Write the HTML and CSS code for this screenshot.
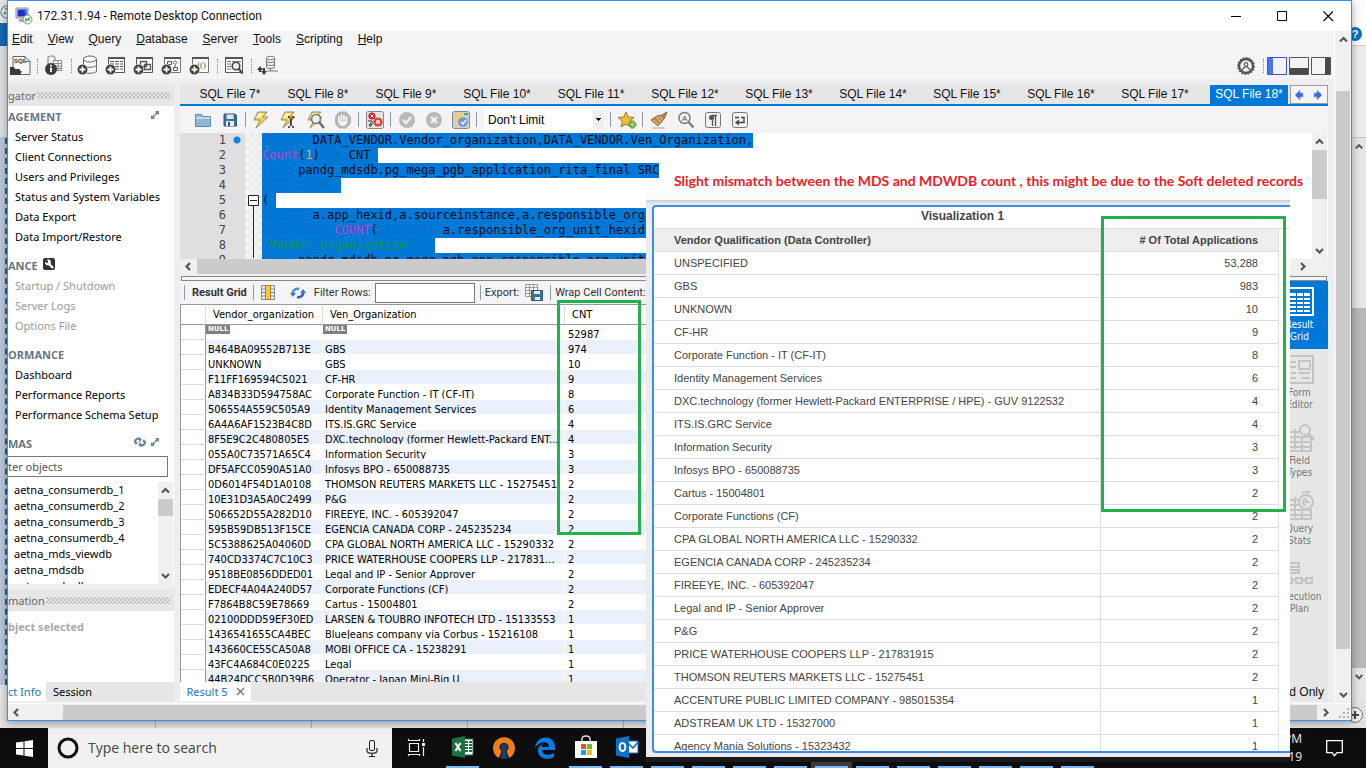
FILE: index.html
```html
<!DOCTYPE html>
<html lang="en">
<head>
<meta charset="utf-8">
<title>172.31.1.94 - Remote Desktop Connection</title>
<link rel="stylesheet" href="styles.css">
</head>
<body>
<svg class="defs" aria-hidden="true">
  <symbol id="up" viewBox="0 0 15 17"><path d="M4 10.500 7.500 7 11 10.500" fill="none" stroke="#555" stroke-width="2.200"/></symbol>
  <symbol id="down" viewBox="0 0 15 17"><path d="M4 7 7.500 10.500 11 7" fill="none" stroke="#555" stroke-width="2.200"/></symbol>
  <symbol id="left" viewBox="0 0 17 15"><path d="M10 4 6.500 7.500 10 11" fill="none" stroke="#555" stroke-width="2.200"/></symbol>
  <symbol id="right" viewBox="0 0 17 15"><path d="M7 4 10.500 7.500 7 11" fill="none" stroke="#555" stroke-width="2.200"/></symbol>
  <symbol id="plus" viewBox="0 0 11 11"><circle cx="5.500" cy="5.500" r="5.200" fill="#3b3b3b" stroke="#f4f4f7" stroke-width=".6"/><path d="M5.500 2.500v6M2.500 5.500h6" stroke="#fff" stroke-width="1.800"/></symbol>
  <symbol id="bolt" viewBox="0 0 20 20"><path d="M6 2h9l-4 5h5L4 18l4-8H2z" fill="#f5cf5a" stroke="#9c8a52" stroke-width="1"/><path d="M7 3h5L8 8H4z" fill="#fff2b8"/></symbol>
  <symbol id="expand" viewBox="0 0 8 8"><path d="M4 0h4v4L6.700 2.700 5 4.400 3.600 3 5.300 1.300zM4 8H0V4l1.300 1.300L3 3.600 4.400 5 2.700 6.700z" fill="#758699"/></symbol>
  <symbol id="grid" viewBox="0 0 30 30"><path d="M1 1h27v27H1z" fill="none" stroke="currentColor" stroke-width="2"/><path d="M4 6h7v3H4zm8 0h6v3h-6zm7 0h6v3h-6zM4 11h7v2H4zm8 0h6v2h-6zm7 0h6v2h-6zM4 15h7v2H4zm8 0h6v2h-6zm7 0h6v2h-6zM4 19h7v2H4zm8 0h6v2h-6zm7 0h6v2h-6zM4 23h7v2H4zm8 0h6v2h-6zm7 0h6v2h-6z" fill="currentColor"/></symbol>
</svg>

<div class="desktop">
  <div class="backdrop backdrop-left">
    <svg class="app-mark" width="7" height="16" viewBox="0 0 7 16"><circle cx="7" cy="8" r="6" fill="#e6eef5" stroke="#7f9db5" stroke-width="1.500"/><circle cx="5" cy="9" r="1.500" fill="#58a55c"/><circle cx="6" cy="5" r="1" fill="#c44"/></svg>
    <div class="strip-blue"></div>
    <div class="strip-ribbon"></div>
    <div class="strip-sheet"></div>
    <div class="strip-foot"></div>
  </div>
  <div class="backdrop backdrop-right">
    <div class="help"><span>?</span></div>
    <div class="right-ribbon"></div>
    <svg class="edge-arrow" width="14" height="17"><use href="#up"/></svg>
    <div class="right-gap"></div>
    <div class="right-thumb"></div>
    <svg class="edge-arrow" width="14" height="17"><use href="#down"/></svg>
  </div>
  <div class="sheet-foot">
    <svg width="18" height="18" viewBox="0 0 18 18"><circle cx="9" cy="9" r="7.500" fill="#eee" stroke="#777"/><path d="M9 5v8M5 9h8" stroke="#444" stroke-width="2"/></svg>
  </div>

  <main class="window">
    <header class="titlebar">
      <svg width="18" height="18" viewBox="0 0 18 18"><path d="M1 1h12v10H1z" fill="#d9dde2" stroke="#8a8f98"/><path d="M2.500 2.500h9v7h-9z" fill="#1c2ec4"/><path d="M8 2.500h3.500v7z" fill="#2b6de8"/><path d="M4 12h6v3H4z" fill="#aab"/><circle cx="12.500" cy="12.500" r="4.500" fill="#f4f7f4" stroke="#879087"/><path d="m10 11.500 2 1.500-2 1.500m5-4-2 1.500 2 1.500" fill="none" stroke="#3b9b3b" stroke-width="1.200"/></svg>
      <h1>172.31.1.94 - Remote Desktop Connection</h1>
      <button aria-label="Minimize"><svg width="11" height="11"><path d="M0 5.500h10" stroke="#000"/></svg></button>
      <button aria-label="Maximize"><svg width="11" height="11"><path d="M.5.5h9v9h-9z" fill="none" stroke="#000"/></svg></button>
      <button aria-label="Close"><svg width="11" height="11"><path d="m.5.5 9.500 9.500m0-9.500L.5 10" stroke="#000" fill="none" stroke-width="1.100"/></svg></button>
    </header>

    <div class="view">
      <div class="app">
        <nav class="menu">
          <a href="#edit"><u>E</u>dit</a><a href="#view"><u>V</u>iew</a><a href="#query"><u>Q</u>uery</a><a href="#database"><u>D</u>atabase</a><a href="#server"><u>S</u>erver</a><a href="#tools"><u>T</u>ools</a><a href="#scripting"><u>S</u>cripting</a><a href="#help"><u>H</u>elp</a>
        </nav>
        <div class="maintools">
          <button aria-label="Open SQL script"><svg width="22" height="22" viewBox="0 0 22 22"><path d="M3 1.500h12l5 5v13H3z" fill="#f7f7f7" stroke="#666"/><path d="M15 1.500v5h5" fill="none" stroke="#666"/><text x="4" y="8" font-size="6" font-weight="700" font-family="Liberation Sans" fill="#333">SQL</text><path d="M0 20v-8h4l1 2h5v2h2l-2 4z" fill="#3b3b3b"/></svg></button>
          <i class="dots"></i>
          <button aria-label="Inspector"><svg width="22" height="22" viewBox="0 0 22 22"><path d="M5 2.500c0-2 7-2 7 0v7H5z" fill="#eee" stroke="#777"/><path d="M10.500 5.500h8v10h-8zM11 8.500h7m-7 2.500h7m-7 2.500h7M15 6v9" fill="#fff" stroke="#888"/><circle cx="8" cy="14" r="6" fill="#3b3b3b"/><path d="M8 12.500v4.500M8 9.800v1.600" stroke="#fff" stroke-width="1.800"/></svg></button>
          <i class="dots"></i>
          <button aria-label="New schema"><svg width="22" height="22" viewBox="0 0 22 22"><path d="M6.500 4v12c0 3 13 3 13 0V4" fill="#f7f7f7" stroke="#666"/><ellipse cx="13" cy="4" rx="6.500" ry="3" fill="#fff" stroke="#666"/><path d="M6.500 10c0 3 13 3 13 0" fill="none" stroke="#666"/><use href="#plus" x="0" y="9" width="11" height="11"/></svg></button>
          <button aria-label="New table"><svg width="22" height="22" viewBox="0 0 22 22"><path d="M3.500 2.500h16v15h-16z" fill="#fff" stroke="#555"/><path d="M3 3h17" stroke="#555" stroke-width="2"/><path d="M5 6.500h4m1 0h4m1 0h3M5 9h4m1 0h4m1 0h3M5 11.500h4m1 0h4m1 0h3m-8 2.500h4m1 0h3" stroke="#555"/><use href="#plus" x="0" y="9" width="11" height="11"/></svg></button>
          <button aria-label="New view"><svg width="22" height="22" viewBox="0 0 22 22"><path d="M3.500 2.500h16v15h-16z" fill="#fff" stroke="#555"/><path d="M3 3h17" stroke="#555" stroke-width="2"/><path d="M7.500 6.500h6v5h-6zM11.500 9.500h6v5h-6z" fill="none" stroke="#555" stroke-width="1.400"/><use href="#plus" x="0" y="9" width="11" height="11"/></svg></button>
          <button aria-label="New routine"><svg width="22" height="22" viewBox="0 0 22 22"><path d="M3.500 2.500h16v15h-16z" fill="#fff" stroke="#777"/><path d="M3 3h17" stroke="#555" stroke-width="2"/><path d="M6.500 6.500h4v3h-4zM14 5.500l2 2-2 2-2-2zM12.500 12.500h4v3h-4zM14 10v2" fill="none" stroke="#555"/><use href="#plus" x="0" y="9" width="11" height="11"/></svg></button>
          <button aria-label="New function"><svg width="22" height="22" viewBox="0 0 22 22"><path d="M3.500 2.500h16v15h-16z" fill="#fff" stroke="#777"/><path d="M3 3h17" stroke="#555" stroke-width="2"/><text x="8" y="13" font-size="9" font-family="Liberation Serif" fill="#666">f()</text><use href="#plus" x="0" y="9" width="11" height="11"/></svg></button>
          <i class="dots"></i>
          <button aria-label="Search table data"><svg width="22" height="22" viewBox="0 0 22 22"><path d="M2.500 2.500h17v15h-17z" fill="#fff" stroke="#555"/><path d="M2 3h18" stroke="#555" stroke-width="2"/><path d="M4 6.500h4m1 0h4m1 0h4M4 9h4M4 11.500h4M4 14h4" stroke="#777"/><circle cx="13" cy="11" r="3.800" fill="#eee" stroke="#444" stroke-width="1.600"/><path d="m15.500 13.500 4 5" stroke="#444" stroke-width="2.200"/></svg></button>
          <i class="dots"></i>
          <button aria-label="Reconnect"><svg width="22" height="22" viewBox="0 0 22 22"><path d="M9.500 3v9c0 2 8 2 8 0V3" fill="#eee" stroke="#777"/><ellipse cx="13.500" cy="3" rx="4" ry="1.700" fill="#fff" stroke="#777"/><path d="M9.500 6c0 2 8 2 8 0m-8 3c0 2 8 2 8 0M13.500 13v3H21m-7.500 0H10" fill="none" stroke="#777"/><path d="M3 17v-3M7 13v4" stroke="#3b3b3b" stroke-width="2.200"/><path d="m0 15 3-4 3 4zM4 16l3 4 3-4z" fill="#3b3b3b"/></svg></button>
          <span class="grow"></span>
          <button aria-label="Preferences"><svg width="18" height="18" viewBox="0 0 18 18"><circle cx="9" cy="9" r="7" fill="none" stroke="#555" stroke-width="2.400"/><circle cx="9" cy="9" r="8" fill="none" stroke="#555" stroke-width="1.800" stroke-dasharray="1.600 1.500"/><circle cx="9" cy="7.500" r="1.800" fill="none" stroke="#555" stroke-width="1.200"/><path d="m5 13 2.500-3h3L13 13" fill="none" stroke="#555" stroke-width="1.200"/></svg></button>
          <i class="dots"></i>
          <button class="toggle" aria-label="Toggle sidebar"><svg width="20" height="18"><path d="M.5.5h19v17H.5z" fill="#f4f4f7" stroke="#3b52d8"/><path d="M1 1h5v16H1z" fill="#4773f0"/></svg></button>
          <button class="toggle" aria-label="Toggle output"><svg width="20" height="18"><path d="M.5.5h19v17H.5z" fill="#f4f4f7" stroke="#555"/><path d="M1 11h18v6H1z" fill="#4a4a4a"/></svg></button>
          <button class="toggle" aria-label="Toggle secondary sidebar"><svg width="20" height="18"><path d="M.5.5h19v17H.5z" fill="#f4f4f7" stroke="#555"/><path d="M14 1h5v16h-5z" fill="#4a4a4a"/></svg></button>
        </div>

        <div class="workbench">
          <aside class="sidebar">
            <div class="panel-head"><span>gator</span><i></i></div>
            <div class="navigator">
              <h2>AGEMENT<svg class="push" width="8" height="8"><use href="#expand"/></svg></h2>
              <ul>
                <li>Server Status</li><li>Client Connections</li><li>Users and Privileges</li><li>Status and System Variables</li><li>Data Export</li><li>Data Import/Restore</li>
              </ul>
              <h2>ANCE<svg class="wrench" width="12" height="12" viewBox="0 0 12 12"><rect width="12" height="12" rx="2" fill="#333"/><path d="m5 5 5 5" stroke="#fff" stroke-width="2.400"/><path d="M2 3.500 3.500 5l1.500-.5L5 2.800 3.600 1.700A3 3 0 1 1 2 4z" fill="#fff"/></svg></h2>
              <ul class="off"><li>Startup / Shutdown</li><li>Server Logs</li><li>Options File</li></ul>
              <h2>ORMANCE</h2>
              <ul><li>Dashboard</li><li>Performance Reports</li><li>Performance Schema Setup</li></ul>
              <h2>MAS<svg class="push" width="12" height="10" viewBox="0 0 12 10"><path d="M1 5c0-3 3-4 5-3m5 3c0 3-3 4-5 3" fill="none" stroke="#64809b" stroke-width="2.200"/><path d="M5 0v5l3-2.500zM7 10V5L4 7.500zM0 5h4L2 8zM12 5H8l2-3z" fill="#64809b"/></svg><svg width="8" height="8"><use href="#expand"/></svg></h2>
              <input class="filter" aria-label="Filter objects" placeholder="ter objects">
              <div class="schemas">
                <ul><li>aetna_consumerdb_1</li><li>aetna_consumerdb_2</li><li>aetna_consumerdb_3</li><li>aetna_consumerdb_4</li><li>aetna_mds_viewdb</li><li>aetna_mdsdb</li><li>aetna_mdwdb</li></ul>
                <div class="vbar"><svg width="15" height="17"><use href="#up"/></svg><b class="thumb-s"></b><svg class="end" width="15" height="17"><use href="#down"/></svg></div>
              </div>
            </div>
            <div class="panel-head second"><span>mation</span><i></i></div>
            <div class="info">bject selected</div>
            <div class="side-tabs"><button class="on">ct Info</button><button>Session</button></div>
          </aside>

          <section class="main">
            <div class="tabs">
              <button>SQL File 7*</button><button>SQL File 8*</button><button>SQL File 9*</button><button class="w">SQL File 10*</button><button class="w">SQL File 11*</button><button class="w">SQL File 12*</button><button class="w">SQL File 13*</button><button class="w">SQL File 14*</button><button class="w">SQL File 15*</button><button class="w">SQL File 16*</button><button class="w">SQL File 17*</button><button class="on">SQL File 18*</button>
              <span class="steps"><svg width="34" height="12" viewBox="0 0 34 12"><path d="M3 6l5-5v3h3v4H8v3z" fill="#3c6be0" stroke="#8aa7ee" stroke-width=".6"/><path d="M30 6l-5-5v3h-3v4h3v3z" fill="#3c6be0" stroke="#8aa7ee" stroke-width=".6"/></svg></span>
            </div>
            <div class="edtools">
              <button aria-label="Open"><svg width="20" height="20" viewBox="0 0 20 20"><path d="M2.500 16.500v-12h6l1 2h8v10z" fill="#8fb6d2" stroke="#5f8aa8"/><path d="M3 8h14" stroke="#c5dcec" stroke-width="2"/></svg></button>
              <button aria-label="Save"><svg width="20" height="20" viewBox="0 0 20 20"><path d="M4 4h11l1.500 1.500V16H4z" fill="#3f7196" stroke="#2e5877"/><path d="M6.500 4.500h7V9h-7z" fill="#d8e6ef"/><path d="M6 11h8v5H6z" fill="#e8e8e8"/><path d="M8 12h2v4H8z" fill="#2e5877"/></svg></button>
              <i></i>
              <button aria-label="Execute"><svg width="20" height="20"><use href="#bolt"/></svg></button>
              <button aria-label="Execute current"><svg width="20" height="20"><use href="#bolt"/><path d="M9 7h2m2 0h2M12 8v8m-3 1h2m2 0h2" stroke="#222" stroke-width="1.600"/></svg></button>
              <button aria-label="Explain"><svg width="20" height="20"><use href="#bolt"/><circle cx="10" cy="9" r="4.500" fill="#e7f1fa" stroke="#777" stroke-width="1.600"/><path d="m13 12 5 6" stroke="#666" stroke-width="2.400"/></svg></button>
              <button aria-label="Stop" disabled><svg width="20" height="20" viewBox="0 0 20 20"><path d="M6 1.500h7l5 5v7l-5 5H6l-4-5v-7z" fill="#b5b5b5"/><path d="M6 10V6m2.500 4V4.500M11 10V5m2.500 6V6.500M6 10c0 4 2 5 4 5s3.500-2 3.500-4" stroke="#f4f4f4" stroke-width="1.800" fill="#eee"/></svg></button>
              <i></i>
              <button aria-label="Toggle stop on error"><svg width="20" height="20" viewBox="0 0 20 20"><rect x="1.500" y="1.500" width="17" height="17" rx="2" fill="#e4e4e4" stroke="#888"/><circle cx="7" cy="6" r="3.600" fill="#c22"/><path d="m5.500 4.500 3 3m0-3-3 3" stroke="#fff"/><circle cx="13" cy="12" r="4.600" fill="#e04030"/><circle cx="13" cy="12" r="2.200" fill="#f6d9d4"/><path d="M3 11h4v4H4m2-2-2 2 2 2" fill="none" stroke="#333"/></svg></button>
              <i></i>
              <button aria-label="Commit" disabled><svg width="20" height="20"><circle cx="10" cy="10" r="8" fill="#b9b9b9"/><path d="m6 10 3 3 5-6" fill="none" stroke="#f4f4f4" stroke-width="2.200"/></svg></button>
              <button aria-label="Rollback" disabled><svg width="20" height="20"><circle cx="10" cy="10" r="8" fill="#b9b9b9"/><path d="m7 7 6 6m0-6-6 6" fill="none" stroke="#f4f4f4" stroke-width="2.200"/></svg></button>
              <button aria-label="Autocommit"><svg width="20" height="20" viewBox="0 0 20 20"><rect x="1.500" y="1.500" width="17" height="17" rx="2" fill="#cfcfcf" stroke="#888"/><path d="M6 3h6L9 7h3L4 16l3-7H4z" fill="#f5cf5a"/><circle cx="12" cy="12" r="4.800" fill="#6b98d6"/><path d="m10 12 2 2 3-4" fill="none" stroke="#fff" stroke-width="1.400"/><path d="M13 4h4" stroke="#58a55c" stroke-width="2"/></svg></button>
              <i></i>
              <select aria-label="Row limit"><option>Don't Limit</option></select>
              <i></i>
              <button aria-label="Save snippet"><svg width="20" height="20" viewBox="0 0 20 20"><path d="m9 2 2.300 5 5.700.5-4.300 3.700L14 17l-5-3-5 3 1.300-5.800L1 7.500 6.700 7z" fill="#f3b93a" stroke="#a6792a"/><path d="M12 13h2v-2h3v2h2v3h-2v2h-3v-2h-2z" fill="#9bd36c" stroke="#3d8a2c" stroke-width=".8"/></svg></button>
              <i></i>
              <button aria-label="Beautify"><svg width="20" height="20" viewBox="0 0 20 20"><path d="m18 2-3 7-6 7-7-6 6-4 5-1z" fill="#c18a49" stroke="#866030"/><path d="m4 10 6 5m-3-8 5 5M9 6l5 4" stroke="#f0d2a0"/><path d="M3 18h13" stroke="#ccc" stroke-width="2"/></svg></button>
              <button aria-label="Find"><svg width="20" height="20" viewBox="0 0 20 20"><circle cx="8.500" cy="8" r="5.500" fill="#f2f2f2" stroke="#777" stroke-width="1.400"/><path d="m12.500 12 5 5.500" stroke="#777" stroke-width="2.200"/><text x="6" y="11" font-size="8" font-family="Liberation Sans" fill="#555">A</text></svg></button>
              <button aria-label="Invisible characters"><svg width="20" height="20" viewBox="0 0 20 20"><rect x="2.500" y="2.500" width="15" height="15" rx="2" fill="#f1f1f1" stroke="#777"/><path d="M9.500 5v11m3-11v11M9 5.500h5" stroke="#555" fill="none" stroke-width="1.300"/><circle cx="8.500" cy="7.500" r="2.500" fill="#555"/></svg></button>
              <button aria-label="Wrap lines"><svg width="20" height="20" viewBox="0 0 20 20"><rect x="2.500" y="2.500" width="15" height="15" rx="2" fill="#f1f1f1" stroke="#777"/><path d="M5 7.500h4m2 0h3v5H7" stroke="#444" fill="none" stroke-width="1.400"/><path d="m9 9.500-4 3 4 3z" fill="#444"/></svg></button>
            </div>
            <div class="editor">
              <ol class="gutter"><li class="dot">1</li><li>2</li><li>3</li><li>4</li><li>5</li><li>6</li><li>7</li><li>8</li><li>9</li></ol>
              <div class="fold"><svg width="17" height="125"><path d="M8.500 73v52" stroke="#222"/><path d="M3.500 62.500h10v10h-10z" fill="#fff" stroke="#222"/><path d="M5 67.500h7" stroke="#222"/></svg></div>
              <pre class="code"><span><s>Select</s> DATA_VENDOR.Vendor_organization,DATA_VENDOR.Ven_Organization,</span>
<span><em>Count</em>(<b>1</b>) <s>as</s> CNT </span>
<span><s>from</s> pandg_mdsdb.pg_mega_pgb_application_rita_final SRC</span>
<span><s>LEFT JOIN</s>  </span>
<span>( </span>
<span><s>SELECT</s> a.app_hexid,a.sourceinstance,a.responsible_org_unit_hexid, </span>
<span><s>CASE WHEN</s> <em>COUNT</em>(<s>distinct</s> a.responsible_org_unit_hexid) </span>
<span><q>'Vendor_organization'</q>   </span>
<span><s>from</s> pandg_mdsdb.pg_mega_pgb_app_responsible_org_unit </span></pre>
              <div class="vbar"><svg width="15" height="17"><use href="#up"/></svg><b class="thumb-e"></b><svg class="end" width="15" height="17"><use href="#down"/></svg></div>
            </div>
            <div class="hbar ed"><svg width="17" height="15"><use href="#left"/></svg><b></b><svg width="50" height="15" viewBox="0 0 50 15"><use href="#right" x="16" width="17" height="15"/></svg></div>
            <div class="splitter"></div>
            <div class="results">
              <div class="resgrid">
                <div class="restools">
                  <i></i><strong>Result Grid</strong><i></i>
                  <svg class="col-ic" width="14" height="15" viewBox="0 0 14 15"><path d="M.5.500h13v14H.500zM1 4h12M1 7.500h12M1 11h12" fill="#eee" stroke="#888"/><path d="M4.500.5h5v14h-5z" fill="#f7c840" stroke="#a8842a"/></svg>
                  <svg class="ref-ic" width="16" height="14" viewBox="0 0 16 14"><path d="M3 9c-1-4 2-7 6-6" fill="none" stroke="#4b8be0" stroke-width="2.600"/><path d="M13 5c1 4-2 7-6 6" fill="none" stroke="#2f62c4" stroke-width="2.600"/><path d="m0 7 6 0-3 4zM16 7h-6l3-4z" fill="#3b76d4"/></svg>
                  <label for="rows">Filter Rows:</label><input id="rows"><i></i><span>Export:</span>
                  <svg class="exp-ic" width="18" height="17" viewBox="0 0 18 17"><path d="M.5.500h12v12H.500zM1 3.500h11M1 6.500h11M1 9.500h11M4.500 1v11M8.500 1v11" fill="#fff" stroke="#999"/><path d="M6.500 6.500h11v10h-11z" fill="#41749a" stroke="#2e5877"/><path d="M9 7h6v3H9zM10 13h5v3h-5z" fill="#e4edf3"/></svg>
                  <i></i><span>Wrap Cell Content:</span>
                </div>
                <div class="tablebox">
                <table class="data">
                  <colgroup><col class="c0"><col class="c1"><col class="c2"><col></colgroup>
                  <thead><tr><th></th><th>Vendor_organization</th><th>Ven_Organization</th><th>CNT</th></tr></thead>
                  <tbody>
                    <tr><td></td><td class="nil"><span>NULL</span></td><td class="nil"><span>NULL</span></td><td>52987</td></tr>
                    <tr><td></td><td>B464BA09552B713E</td><td>GBS</td><td>974</td></tr>
                    <tr><td></td><td>UNKNOWN</td><td>GBS</td><td>10</td></tr>
                    <tr><td></td><td>F11FF169594C5021</td><td>CF-HR</td><td>9</td></tr>
                    <tr><td></td><td>A834B33D594758AC</td><td>Corporate Function - IT (CF-IT)</td><td>8</td></tr>
                    <tr><td></td><td>506554A559C505A9</td><td>Identity Management Services</td><td>6</td></tr>
                    <tr><td></td><td>6A4A6AF1523B4C8D</td><td>ITS.IS.GRC Service</td><td>4</td></tr>
                    <tr><td></td><td>8F5E9C2C480805E5</td><td>DXC.technology (former Hewlett-Packard ENT...</td><td>4</td></tr>
                    <tr><td></td><td>055A0C73571A65C4</td><td>Information Security</td><td>3</td></tr>
                    <tr><td></td><td>DF5AFCC0590A51A0</td><td>Infosys BPO - 650088735</td><td>3</td></tr>
                    <tr><td></td><td>0D6014F54D1A0108</td><td>THOMSON REUTERS MARKETS LLC - 15275451</td><td>2</td></tr>
                    <tr><td></td><td>10E31D3A5A0C2499</td><td>P&amp;G</td><td>2</td></tr>
                    <tr><td></td><td>506652D55A282D10</td><td>FIREEYE, INC. - 605392047</td><td>2</td></tr>
                    <tr><td></td><td>595B59DB513F15CE</td><td>EGENCIA CANADA CORP - 245235234</td><td>2</td></tr>
                    <tr><td></td><td>5C5388625A04060D</td><td>CPA GLOBAL NORTH AMERICA LLC - 15290332</td><td>2</td></tr>
                    <tr><td></td><td>740CD3374C7C10C3</td><td>PRICE WATERHOUSE COOPERS LLP - 217831...</td><td>2</td></tr>
                    <tr><td></td><td>9518BE0856DDED01</td><td>Legal and IP - Senior Approver</td><td>2</td></tr>
                    <tr><td></td><td>EDECF4A04A240D57</td><td>Corporate Functions (CF)</td><td>2</td></tr>
                    <tr><td></td><td>F7864B8C59E78669</td><td>Cartus - 15004801</td><td>2</td></tr>
                    <tr><td></td><td>02100DDD59EF30ED</td><td>LARSEN &amp; TOUBRO INFOTECH LTD - 15133553</td><td>1</td></tr>
                    <tr><td></td><td>1436541655CA4BEC</td><td>BlueJeans company via Corbus - 15216108</td><td>1</td></tr>
                    <tr><td></td><td>143660CE55CA50A8</td><td>MOBI OFFICE CA - 15238291</td><td>1</td></tr>
                    <tr><td></td><td>43FC4A684C0E0225</td><td>Legal</td><td>1</td></tr>
                    <tr><td></td><td>44B24DCC5B0D39B6</td><td>Operator - Japan Mini-Big U</td><td>1</td></tr>
                  </tbody>
                </table>
                </div>
              </div>
              <div class="modes">
                <button class="on"><svg width="30" height="30"><use href="#grid"/></svg>Result<br>Grid</button>
                <button><svg width="30" height="30" viewBox="0 0 30 30"><path d="M1 1h27v27H1z" fill="none" stroke="currentColor" stroke-width="2"/><path d="M5 7h6m-6 5h6m-6 6h6m-6 5h6M14 6h11v8H14zM14 18h11M17 23h8" fill="none" stroke="currentColor" stroke-width="2"/></svg>Form<br>Editor</button>
                <button><svg width="30" height="30" viewBox="0 0 30 30"><path d="M1 5v23h25V15M4 9h11M4 14h21M4 19h21M4 24h21M10 6v20M17 14v13" fill="none" stroke="currentColor" stroke-width="2"/><circle cx="20" cy="7" r="5" fill="#e6e6e6" stroke="currentColor" stroke-width="2"/><path d="m24 11 5 6" stroke="currentColor" stroke-width="3"/></svg>Field<br>Types</button>
                <button><svg width="30" height="30" viewBox="0 0 30 30"><path d="M1 5v23h25V18M4 9h11M4 14h21M4 19h21M4 24h21M10 6v20M17 14v13" fill="none" stroke="currentColor" stroke-width="2"/><circle cx="21" cy="11" r="7" fill="#e6e6e6" stroke="currentColor" stroke-width="2"/><path d="M17 1h8m-4 6v4h4m-4 3a3 3 0 1 1 0-6" fill="none" stroke="currentColor" stroke-width="2"/></svg>Query<br>Stats</button>
                <button><svg width="30" height="30" viewBox="0 0 30 30"><path d="M3 4h11v4H3zM3 11h11v3H3zM1 19h6v5H1zM11 19h6v5h-6zM21 19h6v5h-6zM7 21h4m6 0h4" fill="none" stroke="currentColor" stroke-width="2"/></svg>Execution<br>Plan</button>
              </div>
            </div>
            <div class="res-tabs"><button>Result 5 <svg width="9" height="9"><path d="m1 1 7 7m0-7L1 8" stroke="#777" stroke-width="1.400"/></svg></button><span>Read Only</span></div>
          </section>
        </div>
      </div>
      <div class="vbar outer"><svg width="15" height="17"><use href="#up"/></svg><b></b><svg class="end" width="15" height="17"><use href="#down"/></svg></div>
    </div>
    <div class="hbar bottom"><svg width="55" height="15" viewBox="0 0 55 15"><use href="#left" width="17" height="15"/></svg><b></b><svg width="17" height="15"><use href="#right"/></svg><svg width="17" height="15" viewBox="0 0 17 15"><path d="M13 3h2v2h-2zM9 7h2v2H9zm4 0h2v2h-2zM5 11h2v2H5zm4 0h2v2H9zm4 0h2v2h-2z" fill="#b5b5b5"/></svg></div>
  </main>
</div>

<footer class="taskbar">
  <button class="start" aria-label="Start"><svg width="17" height="17" viewBox="0 0 17 17"><path d="M0 2.500 7.500 1.400V8H0zM8.500 1.300 17 0v8H8.500zM0 9h7.500v6.600L0 14.500zM8.500 9H17v8l-8.500-1.300z" fill="#fff"/></svg></button>
  <label class="search"><svg width="22" height="22"><circle cx="11" cy="11" r="9" fill="none" stroke="#111" stroke-width="3"/></svg><input placeholder="Type here to search" aria-label="Search"><svg width="12" height="17" viewBox="0 0 12 17"><rect x="3.500" y=".5" width="5" height="10" rx="1.500" fill="none" stroke="#222"/><path d="M1 8v3c0 3 10 3 10 0V8M6 13.500V16m-3 .5h6" fill="none" stroke="#222" stroke-width="1.200"/></svg></label>
  <div class="apps">
    <button class="views" aria-label="Task view"><svg width="20" height="20" viewBox="0 0 20 20"><path d="M3.500 5.500h9v8h-9zM2.500 1v1.500h11V1M2.500 18v-1.500h11V18M17.500 1v3m0 5v9" fill="none" stroke="#eee" stroke-width="1.200"/><path d="M16 5h3v3h-3z" fill="#eee"/></svg></button>
    <button class="run" aria-label="Excel"><svg width="24" height="24" viewBox="0 0 24 24"><path d="M12 4h10v16H12z" fill="#fff" stroke="#1d7044"/><path d="M14 6h3v2h-3zm4 0h3v2h-3zm-4 3h3v2h-3zm4 0h3v2h-3zm-4 3h3v2h-3zm4 0h3v2h-3zm-4 3h3v2h-3zm4 0h3v2h-3z" fill="#1d7044"/><path d="M1 3.500 14 1v22L1 20.500z" fill="#1d7044"/><path d="m4.500 8 5 8m0-8-5 8" stroke="#fff" stroke-width="2"/></svg></button>
    <button aria-label="OpenVPN"><svg width="24" height="24" viewBox="0 0 24 24"><path d="M7 22a11 11 0 1 1 10 0l-2.500-7a4.500 4.500 0 1 0-5 0z" fill="#ef7f1a"/><circle cx="12" cy="11" r="3.500" fill="#1c3b68"/><path d="M10.500 12h3l2 11h-7z" fill="#1c3b68"/></svg></button>
    <button aria-label="Edge"><svg width="24" height="24" viewBox="0 0 24 24"><path d="M2 12C3 5 7 1.500 12.500 1.500 19 1.500 22 6 22 11v3H9c0 5 7 6 12 3v4c-7 4-16 1-16-6 0-4 2-6 5-7-1 1-1.500 2-1.500 3H16c0-7-10-6-14 1z" fill="#0a7be0"/></svg></button>
    <button class="run" aria-label="Store"><svg width="24" height="24" viewBox="0 0 24 24"><path d="M1 6h22v17H1z" fill="#fff"/><path d="M8 8V4c0-4 8-4 8 0v4" fill="none" stroke="#ddd" stroke-width="1.400"/><path d="M7 9h5v5H7z" fill="#e8502f"/><path d="M13 9h5v5h-5z" fill="#7cb82f"/><path d="M7 15h5v5H7z" fill="#1ba0e2"/><path d="M13 15h5v5h-5z" fill="#fbb813"/></svg></button>
    <button class="run" aria-label="Outlook"><svg width="24" height="24" viewBox="0 0 24 24"><path d="M12 6h11v12H12z" fill="#fff" stroke="#0b72c6"/><path d="m13 8 5 5 5-6" fill="none" stroke="#0b72c6" stroke-width="1.600"/><path d="M1 3.500 14 1v22L1 20.500z" fill="#0b72c6"/><ellipse cx="7.500" cy="12" rx="2.800" ry="4" fill="none" stroke="#fff" stroke-width="2"/></svg></button>
    <button class="run" aria-label="App 1"></button><button class="run" aria-label="App 2"></button><button class="run" aria-label="App 3"></button><button class="run" aria-label="App 4"></button><button class="run now" aria-label="App 5"></button><button class="run" aria-label="App 6"></button><button class="run" aria-label="App 7"></button><button class="run" aria-label="App 8"></button><button class="run" aria-label="App 9"></button><button class="run" aria-label="App 10"></button><button class="run" aria-label="App 11"></button>
  </div>
  <div class="clock"><span>PM</span><span>2019</span></div>
  <button class="notes" aria-label="Notifications"><svg width="17" height="17" viewBox="0 0 17 17"><path d="M.7.700h15.600v12H11l-2.500 3-2.500-3H.700z" fill="none" stroke="#fff" stroke-width="1.300"/></svg></button>
</footer>

<p class="note">Slight mismatch between the MDS and MDWDB count , this might be due to the Soft deleted records</p>

<section class="viz">
  <div class="viz-card">
    <h2>Visualization 1</h2>
    <table>
      <colgroup><col><col class="v1"><col class="v2"></colgroup>
      <thead><tr><th>Vendor Qualification (Data Controller)</th><th># Of Total Applications</th><th></th></tr></thead>
      <tbody>
        <tr><td>UNSPECIFIED</td><td>53,288</td></tr>
        <tr><td>GBS</td><td>983</td></tr>
        <tr><td>UNKNOWN</td><td>10</td></tr>
        <tr><td>CF-HR</td><td>9</td></tr>
        <tr><td>Corporate Function - IT (CF-IT)</td><td>8</td></tr>
        <tr><td>Identity Management Services</td><td>6</td></tr>
        <tr><td>DXC.technology (former Hewlett-Packard ENTERPRISE / HPE) - GUV 9122532</td><td>4</td></tr>
        <tr><td>ITS.IS.GRC Service</td><td>4</td></tr>
        <tr><td>Information Security</td><td>3</td></tr>
        <tr><td>Infosys BPO - 650088735</td><td>3</td></tr>
        <tr><td>Cartus - 15004801</td><td>2</td></tr>
        <tr><td>Corporate Functions (CF)</td><td>2</td></tr>
        <tr><td>CPA GLOBAL NORTH AMERICA LLC - 15290332</td><td>2</td></tr>
        <tr><td>EGENCIA CANADA CORP - 245235234</td><td>2</td></tr>
        <tr><td>FIREEYE, INC. - 605392047</td><td>2</td></tr>
        <tr><td>Legal and IP - Senior Approver</td><td>2</td></tr>
        <tr><td>P&amp;G</td><td>2</td></tr>
        <tr><td>PRICE WATERHOUSE COOPERS LLP - 217831915</td><td>2</td></tr>
        <tr><td>THOMSON REUTERS MARKETS LLC - 15275451</td><td>2</td></tr>
        <tr><td>ACCENTURE PUBLIC LIMITED COMPANY - 985015354</td><td>1</td></tr>
        <tr><td>ADSTREAM UK LTD - 15327000</td><td>1</td></tr>
        <tr><td>Agency Mania Solutions - 15323432</td><td>1</td></tr>
      </tbody>
    </table>
  </div>
</section>
<div class="mark mark-grid"></div>
<div class="mark mark-viz"></div>
</body>
</html>
```
FILE: styles.css
```css
* { box-sizing: border-box; }
body { margin: 0; height: 100vh; display: flex; flex-direction: column; overflow: hidden; position: relative; font: 12px/16px "Liberation Sans", Arial, sans-serif; color: #111; background: #e8e8e8; }
button { border: 0; padding: 0; margin: 0; background: none; font: inherit; color: inherit; display: flex; align-items: center; justify-content: center; white-space: nowrap; }
ul, ol { list-style: none; margin: 0; padding: 0; }
h1, h2, p { margin: 0; }
a { color: inherit; text-decoration: none; }
svg { display: block; flex: none; }
.defs { position: absolute; width: 0; height: 0; }
.grow { flex: 1; }

/* Spreadsheet window behind */
.desktop { flex: 1; min-height: 0; position: relative; background: #e6e6e6; }
.backdrop { position: absolute; top: 0; bottom: 0; display: flex; flex-direction: column; background: #e6e6e6; }
.backdrop-left { left: 0; width: 7px; }
.backdrop-right { right: 0; width: 14px; padding-bottom: 41px; }
.app-mark { margin-top: 4px; }
.strip-blue { height: 23px; margin-top: 3px; background: #1565b4; }
.strip-ribbon { height: 92px; background: #dde0e4; border-bottom: 1px solid #bbb; }
.strip-sheet { flex: 1; background: #b9c7da; border-right: 2px dashed #1b5fa5; }
.strip-foot { height: 43px; }
.help { height: 46px; padding-top: 27px; overflow: hidden; background: #fcfcfc; border-bottom: 1px solid #ccc; }
.help span { display: block; width: 14px; height: 14px; margin-left: -4px; border-radius: 7px; background: #0b6fc6; color: #fff; text-align: center; font: bold 11px/14px "Liberation Sans", sans-serif; }
.right-ribbon { height: 92px; background: #ececef; border-bottom: 1px solid #c4c4c4; }
.edge-arrow { margin: 0 0 2px; }
.right-gap { height: 151px; }
.right-thumb { flex: 1; background: #b8b8b8; }
.sheet-foot { position: absolute; right: 0; bottom: 0; left: 0; height: 26px; display: flex; justify-content: flex-end; align-items: center; padding: 0 2px 0 0; background: repeating-linear-gradient(90deg, #e2e2e2 0 155px, #b0b0b0 155px 156px); }

/* Remote desktop window */
.window { position: absolute; inset: 0 14px 7px 7px; border: 1px solid #3a8ee6; background: #f0f0f0; display: flex; flex-direction: column; box-shadow: 0 2px 8px rgba(0,0,0,.35); }
.titlebar { height: 30px; flex: none; display: flex; align-items: center; gap: 4px; padding: 0 2px 0 7px; background: #fff; }
.titlebar h1 { flex: 1; font: 12px/16px Roboto, sans-serif; }
.titlebar button { width: 42px; height: 30px; }
.view { flex: 1; min-height: 0; display: flex; }
.app { flex: 1; min-width: 0; display: flex; flex-direction: column; background: #eeeef1; }
.vbar { width: 15px; flex: none; display: flex; flex-direction: column; background: #f0f0f0; }
.vbar b, .hbar b { background: #cbcbcb; display: block; }
.vbar .end { margin-top: auto; }
.thumb-s { height: 17px; }
.thumb-e { height: 49px; }
.outer { width: 17px; padding: 0 1px; border-left: 1px solid #fff; }
.outer b { flex: 1; margin: 43px 0 37px; }
.hbar { height: 15px; flex: none; display: flex; background: #f0f0f0; }
.hbar b { flex: 1; }
.bottom { height: 17px; padding-top: 1px; border-top: 1px solid #fff; }

.menu { height: 17px; flex: none; display: flex; gap: 15px; padding-left: 4px; background: #f4f4f7; }
.maintools { height: 31px; flex: none; display: flex; align-items: center; padding: 4px 2px 0 0; background: #f4f4f7; }
.maintools button { width: 28px; height: 22px; }
.maintools button:first-child { width: 26px; }
.maintools .toggle { width: 22px; }
.dots { width: 2px; height: 14px; border-left: 1px dotted #888; margin: 0 1px 0 3px; }

.workbench { flex: 1; min-height: 0; display: grid; grid-template-columns: 166px minmax(0, 1fr); column-gap: 6px; padding: 6px 6px 2px 0; }

/* Sidebar */
.sidebar { display: flex; flex-direction: column; min-height: 0; font: 11px/20px "Noto Sans", sans-serif; color: #000; }
.panel-head { height: 21px; flex: none; display: flex; align-items: center; gap: 1px; padding-right: 4px; background: #e6e6e6; color: #666; }
.panel-head i { flex: 1; height: 7px; background: radial-gradient(circle at 1px 1px, #c2c2c2 1px, transparent 1px) 0 0 / 4px 4px, radial-gradient(circle at 1px 1px, #c2c2c2 1px, transparent 1px) 2px 2px / 4px 4px; }
.second { margin-top: 6px; }
.navigator { flex: 1; min-height: 0; background: #fff; display: flex; flex-direction: column; }
.sidebar h2 { height: 21px; flex: none; display: flex; align-items: center; font: bold 11px/20px "Open Sans", sans-serif; color: #66757f; }
.sidebar h2 svg { margin: 0 15px 3px 0; }
.sidebar h2 .push { margin-left: auto; }
.sidebar h2 .push:not(:last-child) { margin-right: 5px; }
.sidebar h2 .wrench { margin-left: 5px; }
.navigator > ul { padding-left: 7px; margin-bottom: 8px; }
.navigator > ul li { height: 20px; white-space: nowrap; }
.off { color: #9a9a9a; }
.filter { width: 160px; height: 21px; flex: none; border: 1px solid #777; border-left: 0; padding: 0; margin: 2px 0 5px; font: inherit; }
.filter::placeholder { color: #555; opacity: 1; }
.schemas { flex: 1; min-height: 0; overflow: hidden; display: flex; padding-right: 1px; }
.schemas ul { flex: 1; padding-left: 6px; line-height: 16px; }
.info { height: 71px; flex: none; padding-top: 6px; background: #fff; color: #aaa; font-weight: 700; }
.side-tabs { height: 19px; display: flex; background: #e6e6e6; flex: none; }
.side-tabs button { padding: 0 7px; }
.side-tabs .on { width: 38px; padding: 0; justify-content: flex-start; color: #1a73c5; background: #fff; }

/* SQL editor */
.main { min-width: 0; display: flex; flex-direction: column; min-height: 0; }
.tabs { height: 21px; flex: none; display: flex; padding-left: 6px; background: #e6e6e6; border-bottom: 2px solid #0078d7; }
.tabs button { width: 88px; padding-bottom: 2px; }
.tabs .w { width: 94px; }
.tabs .on { width: 78px; margin-left: 8px; background: #0078d7; color: #fff; }
.steps { margin-left: auto; width: 38px; border: 1px solid #999; background: #f4f4f4; display: flex; align-items: center; justify-content: center; }
.edtools { height: 27px; flex: none; display: flex; align-items: center; padding: 0 9px; background: #f4f4f6; }
.edtools button { width: 27px; height: 22px; }
.edtools i { width: 1px; height: 15px; margin: 0 2px; background: #8c9aa8; }
.edtools select { width: 121px; height: 21px; margin: 0 3px 0 5px; padding: 0 4px; border: 0; appearance: none; font: inherit; background: linear-gradient(#111, #111) 112px 9px / 5px 1px no-repeat, linear-gradient(#111, #111) 113px 10px / 3px 1px no-repeat, linear-gradient(#111, #111) 114px 11px / 1px 1px no-repeat, linear-gradient(#eee, #eee) 109px 1px / 11px 19px no-repeat, #fff; }
.editor { height: 126px; flex: none; display: flex; overflow: hidden; background: #fff; padding-right: 1px; font: 12px/15px "DejaVu Sans Mono", monospace; }
.gutter { width: 65px; flex: none; padding-right: 19px; text-align: right; background: #dfdfdf; color: #444; }
.dot { background: radial-gradient(circle at 57px 7px, #0a84e8 3px, transparent 4px); margin-right: -19px; padding-right: 19px; }
.fold { width: 17px; flex: none; background: repeating-conic-gradient(#e8e8e8 0 25%, #fff 0 50%) 0 0 / 2px 2px; }
.code { flex: 1; min-width: 0; margin: 0; overflow: hidden; font: inherit; color: #050f1c; }
.code span { display: inline-block; height: 15px; vertical-align: top; background: #0078d7; }
.code s { text-decoration: none; color: #0a6fc6; }
.code em { font-style: normal; color: #c73bc7; }
.code b { font-weight: 400; color: #f0a848; }
.code q { quotes: none; color: #159a3c; }
.code q::before, .code q::after { content: none; }
.splitter { height: 5px; flex: none; margin: 2px 1px 0; border: 1px solid #888; background: #f4f4f4; }

/* Results */
.results { flex: 1; min-height: 0; display: flex; }
.resgrid { flex: 1; min-width: 0; display: flex; flex-direction: column; font: 11px/14px "DejaVu Sans Condensed", "DejaVu Sans", sans-serif; }
.restools { height: 23px; flex: none; display: flex; align-items: center; background: #f4f4f6; color: #333; white-space: nowrap; font: 11px/14px Roboto, sans-serif; }
.restools i { width: 1px; height: 15px; margin: 0 4px; background: #8c9aa8; }
.restools strong { margin: 0 2px 0 3px; }
.restools input { width: 100px; height: 20px; margin: 0 1px 0 4px; border: 1px solid #777; background: #fff; }
.col-ic { margin: 0 15px 0 3px; }
.ref-ic { margin-right: 8px; }
.exp-ic { margin: 0 3px 0 6px; }
.tablebox { flex: 1; min-height: 0; overflow: hidden; background: #fff; border-left: 1px solid #999; }
.data { width: 100%; table-layout: fixed; border-spacing: 0; color: #000; }
.c0 { width: 25px; } .c1 { width: 117px; } .c2 { width: 242px; }
.data th { height: 21px; padding: 1px 7px 0; text-align: left; font-weight: 400; border-top: 1px solid #999; border-bottom: 1px solid #999; border-right: 1px solid #ddd; white-space: nowrap; }
.data td { height: 15px; padding: 5px 0 0 2px; line-height: 9px; overflow: hidden; white-space: nowrap; border-bottom: 1px solid #fff; border-right: 1px solid #fff; }
.data td:last-child { padding-left: 3px; }
.data td:first-child { border-right: 1px solid #999; border-bottom-color: #ddd; background: #fff; }
.data tr:nth-child(even) td { background-color: #eaf1fc; }
.data tr:nth-child(even) td:first-child { background: #fff; }
.data .nil { padding: 0 0 5px; }
.nil span { display: inline-block; height: 9px; padding: 0 2px; background: #808080; color: #fff; font: bold 7px/9px "DejaVu Sans", sans-serif; vertical-align: top; }
.modes { width: 57px; flex: none; background: #e6e6e6; font: 10px/12px "DejaVu Sans Condensed", "DejaVu Sans", sans-serif; color: #777; }
.modes button { width: 57px; height: 68px; flex-direction: column; }
.modes svg { margin-bottom: 2px; color: #c4c4c4; }
.modes .on, .modes .on svg { background: #0078d7; color: #fff; }
.res-tabs { height: 19px; flex: none; display: flex; justify-content: space-between; align-items: center; padding-right: 4px; background: #e6e6e6; }
.res-tabs button { width: 71px; height: 19px; gap: 8px; background: #fff; color: #1a73c5; font: 11px/16px "Noto Sans", sans-serif; }

/* Taskbar */
.taskbar { height: 40px; flex: none; display: flex; background: #0d0d0d; color: #eee; }
.start { width: 48px; }
.search { width: 344px; display: flex; align-items: center; gap: 9px; padding: 0 14px 0 9px; background: #f1f1f1; }
.search input { flex: 1; min-width: 0; border: 0; background: none; padding: 0; font: 14px/20px "Open Sans", sans-serif; }
.search input::placeholder { color: #444; opacity: 1; }
.apps { flex: 1; display: flex; padding-left: 3px; }
.apps button { width: 41px; flex: none; }
.apps .views { margin-right: 6px; }
.run { border-bottom: 2px solid transparent; background: linear-gradient(#76b9ff, #76b9ff) 4px bottom / 33px 2px no-repeat border-box; }
.now { background-color: #3a3a3a; }
.clock { width: 60px; display: flex; flex-direction: column; justify-content: center; align-items: flex-end; font: 12px/18px "Open Sans", sans-serif; }
.notes { width: 64px; }

/* Annotations and report */
.note { position: absolute; left: 674px; top: 171px; font: bold 14px/20px Lato, sans-serif; color: #ed1c24; white-space: nowrap; }
.viz { position: absolute; left: 646px; top: 191px; width: 644px; bottom: 6px; padding: 14px 0 4px 6px; border-bottom: 5px solid #1a1a1a; background: linear-gradient(#fbfbfb 0 9px, #cfcfcf 9px 10px, #e2e2e2 11px, #ececec 14px); }
.viz-card { height: 100%; overflow: hidden; border: 2px solid #3a8ee6; border-right: 0; border-radius: 4px 0 0 4px; background: #fff; color: #444; }
.viz h2 { height: 21px; margin-right: 19px; font-size: 12px; line-height: 19px; text-align: center; }
.viz table { width: 100%; table-layout: fixed; border-spacing: 0; font-size: 11px; }
.v1 { width: 178px; } .v2 { width: 11px; }
.viz th, .viz td { height: 23px; padding: 0 20px; text-align: left; line-height: 22px; border-bottom: 1px solid #ddd; border-right: 1px solid #ddd; white-space: nowrap; }
.viz th { height: 24px; background: #eee; border-top: 1px solid #ddd; }
.viz th:nth-child(2), .viz td:nth-child(2) { text-align: right; }
.viz th:last-child { padding: 0; background: #fff; border-right: 0; border-bottom: 0; }
.mark { position: absolute; border: 3px solid #22b14c; pointer-events: none; }
.mark-grid { left: 557px; top: 300px; width: 84px; height: 235px; }
.mark-viz { left: 1101px; top: 216px; width: 185px; height: 296px; }
```
